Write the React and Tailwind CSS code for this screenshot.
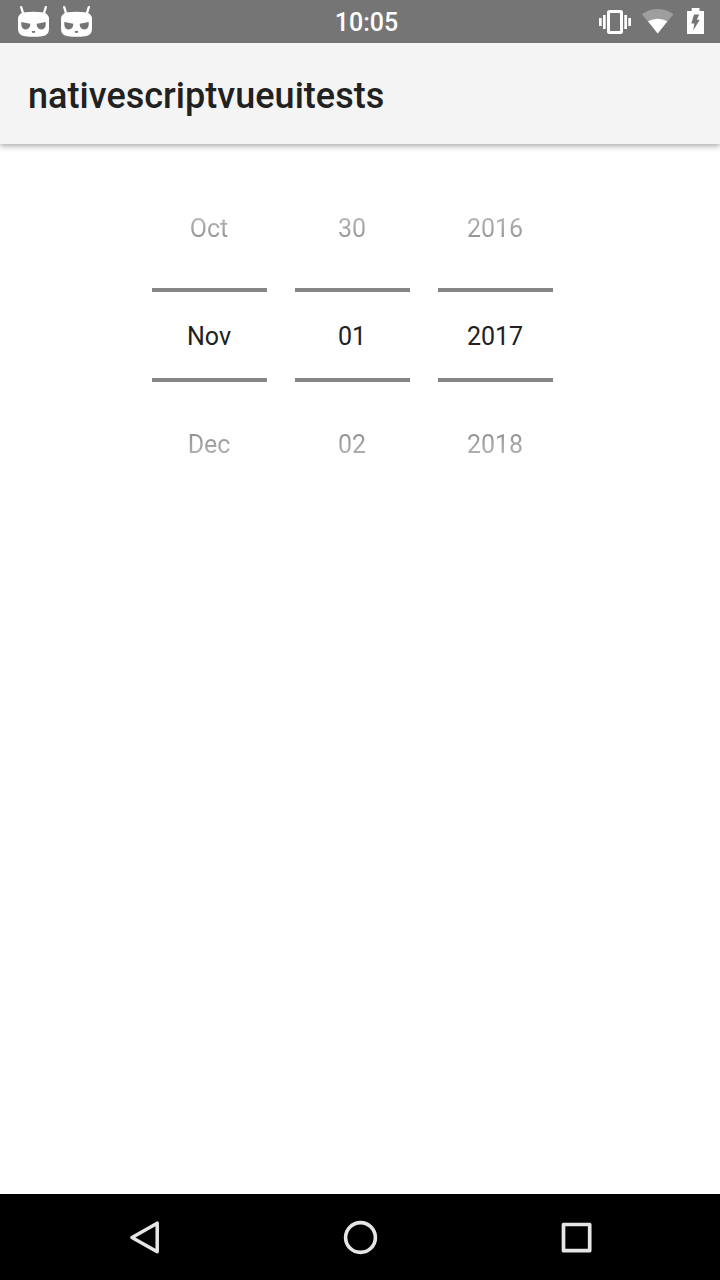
const COLUMNS = [
  { previous: "Oct", current: "Nov", next: "Dec" },
  { previous: "30", current: "01", next: "02" },
  { previous: "2016", current: "2017", next: "2018" },
];

function CidIcon() {
  return (
    <svg width="31" height="32" viewBox="0 0 31 32">
      <path d="M3.200 1.200 L5.300 8 M27.800 1.200 L25.700 8" stroke="#fff" strokeWidth="2.300" strokeLinecap="round" />
      <path
        d="M7 6.300 Q15.500 5.300 24 6.300 Q31 7 31 13.500 V23 Q31 29.300 24 30.200 Q15.500 31.200 7 30.200 Q0 29.300 0 23 V13.500 Q0 7 7 6.300 Z"
        fill="#fff"
      />
      <path d="M3.300 16 L12.300 17.800 C12.600 25 3.300 25.500 3.300 18.500 Z M27.700 16 L18.700 17.800 C18.400 25 27.700 25.500 27.700 18.500 Z" fill="#757575" />
      <path d="M13.600 25 H17.400 L16.500 27 H14.500 Z" fill="#757575" />
    </svg>
  );
}

function VibrateIcon() {
  return (
    <svg width="32" height="24" viewBox="0 0 32 24">
      <rect x="9.500" y="1.500" width="13" height="21" rx="1" fill="none" stroke="#fff" strokeWidth="3" strokeLinejoin="round" />
      <path d="M0 8h2.700v8H0zM4 5h2.700v14H4zM25.300 5H28v14h-2.700zM29.300 8H32v8h-2.700z" fill="#fff" />
    </svg>
  );
}

function WifiIcon() {
  return (
    <svg width="32" height="25" viewBox="0 0 32 25">
      <path d="M15.700 24.500 L0 5.200 Q7 0 15.700 0 T31.400 5.200 Z" fill="#fff" fillOpacity="0.3" />
      <path d="M15.700 24.500 L6 12.300 Q10.200 9.700 15.700 9.700 T25.400 12.300 Z" fill="#fff" />
    </svg>
  );
}

function BatteryIcon() {
  return (
    <svg width="17" height="26" viewBox="0 0 17 26">
      <path d="M4.700 0h7.800v3H17v23H0V3h4.700z" fill="#fff" />
      <path d="M7 6.500 H12.200 L9.800 11.800 H12.800 L6.200 22.500 L7.400 15.600 H4.300 Z" fill="#757575" />
    </svg>
  );
}

function PickerColumn({ previous, current, next }) {
  return (
    <div className="flex w-[115px] flex-col text-center text-[25px] leading-[30px] text-[#212121]">
      <span className="mb-[44px] bg-linear-to-b from-[#bbbbbb] to-[#8c8c8c] bg-clip-text pr-px text-transparent">{previous}</span>
      <div className="flex h-[94px] items-center justify-center border-y-4 border-[#868686] pt-[4px] pr-px">{current}</div>
      <span className="mt-[48px] bg-linear-to-b from-[#8c8c8c] to-[#bbbbbb] bg-clip-text pr-px text-transparent">{next}</span>
    </div>
  );
}

export default function App() {
  return (
    <div className="flex h-[1280px] w-[720px] flex-col overflow-hidden bg-white font-['Roboto',sans-serif]">
      <header className="relative z-10 grid h-[43px] shrink-0 grid-cols-3 bg-[#757575] text-white">
        <div className="flex gap-3 pt-[6px] pl-[18px]">
          <CidIcon />
          <CidIcon />
        </div>
        <div className="pt-[8px] pl-[13px] text-center text-[25px] leading-[30px] font-medium">10:05</div>
        <div className="flex items-start justify-end pt-[9px] pr-4">
          <div className="mt-px mr-[11px]"><VibrateIcon /></div>
          <div className="mr-[13px]"><WifiIcon /></div>
          <div className="-mt-px"><BatteryIcon /></div>
        </div>
      </header>

      <div className="flex h-[101px] shrink-0 items-center bg-[#f4f4f4] pt-[5px] pl-7 shadow-[0_2px_6px_rgba(0,0,0,0.35)]">
        <h1 className="text-[36px] leading-[42px] font-medium tracking-[0.03px] text-[#212121]">nativescriptvueuitests</h1>
      </div>

      <main className="flex flex-1 items-start gap-7 pt-[70px] pl-[152px]">
        {COLUMNS.map((column) => (
          <PickerColumn key={column.current} {...column} />
        ))}
      </main>

      <nav className="flex h-[86px] shrink-0 items-center justify-between bg-black px-[127px]">
        <svg width="36" height="36" viewBox="0 0 36 36" fill="none" stroke="#e6e6e6" strokeWidth="3.500" strokeLinejoin="round">
          <path d="M30.200 4.200 V32.800 L5 18.500 Z" />
        </svg>
        <svg width="36" height="36" viewBox="0 0 36 36" fill="none" stroke="#e6e6e6" strokeWidth="3.600">
          <circle cx="18.500" cy="18.500" r="14.900" />
        </svg>
        <svg width="36" height="36" viewBox="0 0 36 36" fill="none" stroke="#e6e6e6" strokeWidth="3.700" strokeLinejoin="round">
          <rect x="6.500" y="5.500" width="26.200" height="26.200" />
        </svg>
      </nav>
    </div>
  );
}
